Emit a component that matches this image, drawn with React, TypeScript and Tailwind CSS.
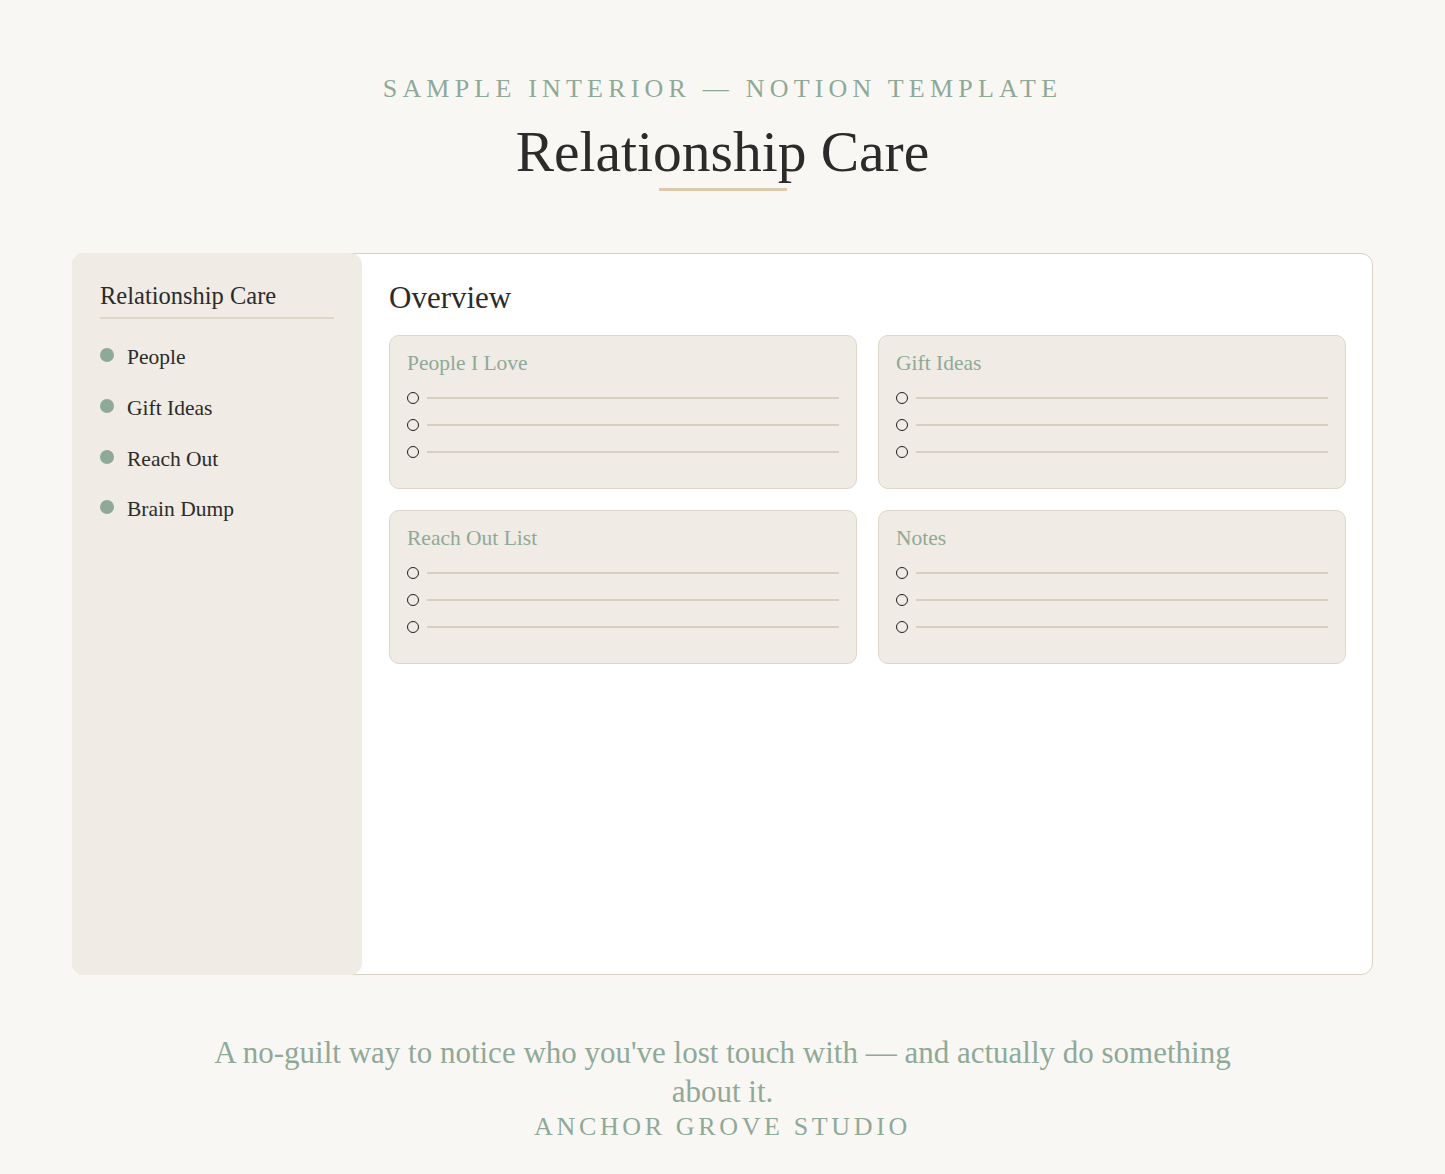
const serif = "font-['Liberation_Serif',serif]";

const navItems = ['People', 'Gift Ideas', 'Reach Out', 'Brain Dump'];
const cards = ['People I Love', 'Gift Ideas', 'Reach Out List', 'Notes'];

function ChecklistCard({ title }: { title: string }) {
  return (
    <div className="rounded-[10px] border border-[#ddd6ca] bg-[#f0ebe4] px-[17px] pt-[14px] pb-[23px]">
      <h3 className="text-[21.5px] leading-[27px] text-[#8fa998]">{title}</h3>
      <ul className="mt-[7px]">
        {[0, 1, 2].map((i) => (
          <li key={i} className="flex h-[27px] items-center gap-[8px]">
            <span className="h-[12px] w-[12px] shrink-0 rounded-full border-[1.5px] border-[#1f1f1f]" />
            <span className="h-[2px] flex-1 bg-[#d6cfc2]" />
          </li>
        ))}
      </ul>
    </div>
  );
}

export default function App() {
  return (
    <div className={`min-h-[1174px] bg-[#f9f7f3] px-[72px] pt-[73px] ${serif}`}>
      {/* Header */}
      <header className="flex flex-col items-center">
        <p className="text-[26px] leading-[32px] tracking-[0.2em] text-[#8fa998]">
          SAMPLE INTERIOR — NOTION TEMPLATE
        </p>
        <h1 className="mt-[15px] text-[57.5px] leading-[64px] text-[#2b2b2b]">Relationship Care</h1>
        <div className="mt-[4px] h-[3px] w-[128px] bg-[#dcc8ac]" />
      </header>

      {/* Template frame */}
      <div className="mt-[62px] flex h-[722px] rounded-xl border border-[#d8d1c6] bg-white">
        <aside className="-m-px w-[290px] shrink-0 rounded-xl bg-[#f0ebe4] px-[28px] pt-[27px]">
          <div className="border-b-2 border-[#ddd6c9] pb-[6px] text-[24.5px] leading-[31px] text-[#2b2b2b]">
            Relationship Care
          </div>
          <nav className="mt-[13px]">
            {navItems.map((item) => (
              <div key={item} className="flex h-[50.7px] items-center gap-[13px]">
                <span className="-mt-[4px] h-[14px] w-[14px] rounded-full bg-[#8fa998]" />
                <span className="text-[21.5px] text-[#2b2b2b]">{item}</span>
              </div>
            ))}
          </nav>
        </aside>

        <main className="flex-1 pl-[28px] pr-[26px] pt-[26px]">
          <h2 className="text-[31px] leading-[36px] text-[#2b2b2b]">Overview</h2>
          <div className="mt-[19px] grid grid-cols-2 gap-x-[21px] gap-y-[21px]">
            {cards.map((c) => (
              <ChecklistCard key={c} title={c} />
            ))}
          </div>
        </main>
      </div>

      {/* Footer */}
      <footer className="mx-auto mt-[58px] flex max-w-[1030px] flex-col items-center text-center text-[#8fa998]">
        <p className="text-[31px] leading-[39px]">
          A no-guilt way to notice who you've lost touch with — and actually do something about it.
        </p>
        <p className="text-[26px] leading-[32px] tracking-[0.14em]">ANCHOR GROVE STUDIO</p>
      </footer>
    </div>
  );
}
